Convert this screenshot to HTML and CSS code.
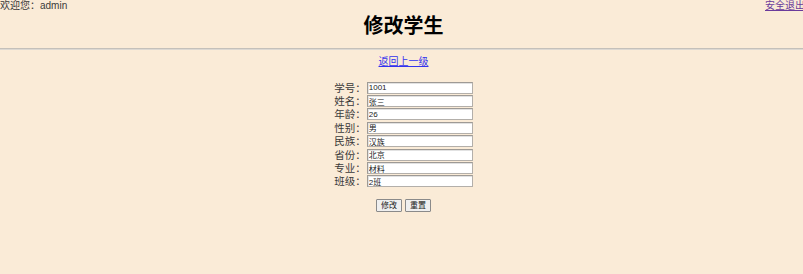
FILE: index.html
```html
<!DOCTYPE html>
<html lang="zh">
<head>
<meta charset="utf-8">
<title>修改学生</title>
<link rel="stylesheet" href="styles.css">
</head>
<body>
<div class="page">
  <div class="topbar">
    <span class="welcome">欢迎您：admin</span>
    <a class="logout" href="#">安全退出</a>
  </div>
  <h1 class="title">修改学生</h1>
  <hr class="rule">
  <div class="back"><a href="#">返回上一级</a></div>
  <form class="form">
    <div class="fields">
      <label>学号：</label><input type="text" value="1001">
      <label>姓名：</label><input type="text" value="张三">
      <label>年龄：</label><input type="text" value="26">
      <label>性别：</label><input type="text" value="男">
      <label>民族：</label><input type="text" value="汉族">
      <label>省份：</label><input type="text" value="北京">
      <label>专业：</label><input type="text" value="材料">
      <label>班级：</label><input type="text" value="2班">
    </div>
    <div class="buttons">
      <button type="button" class="btn">修改</button>
      <button type="reset" class="btn">重置</button>
    </div>
  </form>
</div>
</body>
</html>
```
FILE: styles.css
```css
html, body {
  margin: 0;
  padding: 0;
  background: #faebd7;
  overflow: hidden;
}
body {
  font-family: "Liberation Sans", "Noto Sans CJK SC", sans-serif;
  color: #3a3a3a;
}
.page {
  width: 807px;
}
.topbar {
  display: flex;
  justify-content: space-between;
  height: 12px;
  font-size: 10px;
  line-height: 12px;
}
.logout {
  color: #6a3a9b;
  margin-right: 2px;
}
.title {
  margin: 0;
  text-align: center;
  font-size: 20px;
  line-height: 28px;
  font-weight: bold;
  color: #000;
}
.rule {
  margin: 8px 0 0;
  border: 0;
  border-top: 1px solid #c4c0ba;
  border-bottom: 1px solid #dcd8d2;
  height: 0;
}
.back {
  margin-top: 6px;
  text-align: center;
  font-size: 10px;
  line-height: 12px;
}
.back a {
  color: #3333ee;
}
.form {
  margin: 13px 0 0;
}
.fields {
  display: grid;
  grid-template-columns: auto 106px;
  grid-auto-rows: 13.4px;
  column-gap: 1px;
  justify-content: center;
  align-items: center;
}
.fields label {
  font-size: 10.5px;
  line-height: 12px;
  text-align: right;
  color: #3a3a3a;
}
.fields input {
  box-sizing: border-box;
  width: 106px;
  height: 12px;
  margin: 0;
  padding: 0 1px;
  border: 1px solid #b3afaa;
  border-top-color: #9e9a95;
  border-left-color: #9e9a95;
  box-shadow: inset 1px 1px 0 #e2e2e2;
  background: #fff;
  font-family: "Liberation Sans", "Noto Sans CJK SC", sans-serif;
  font-size: 8px;
  color: #222;
}
.buttons {
  margin-top: 11px;
  display: flex;
  justify-content: center;
  gap: 3px;
}
.btn {
  box-sizing: border-box;
  height: 13px;
  width: 26px;
  padding: 0;
  font-family: "Liberation Sans", "Noto Sans CJK SC", sans-serif;
  font-size: 8px;
  line-height: 10px;
  color: #222;
  background: #efefef;
  border: 1px solid #8a8a8a;
  border-radius: 1px;
}
```
